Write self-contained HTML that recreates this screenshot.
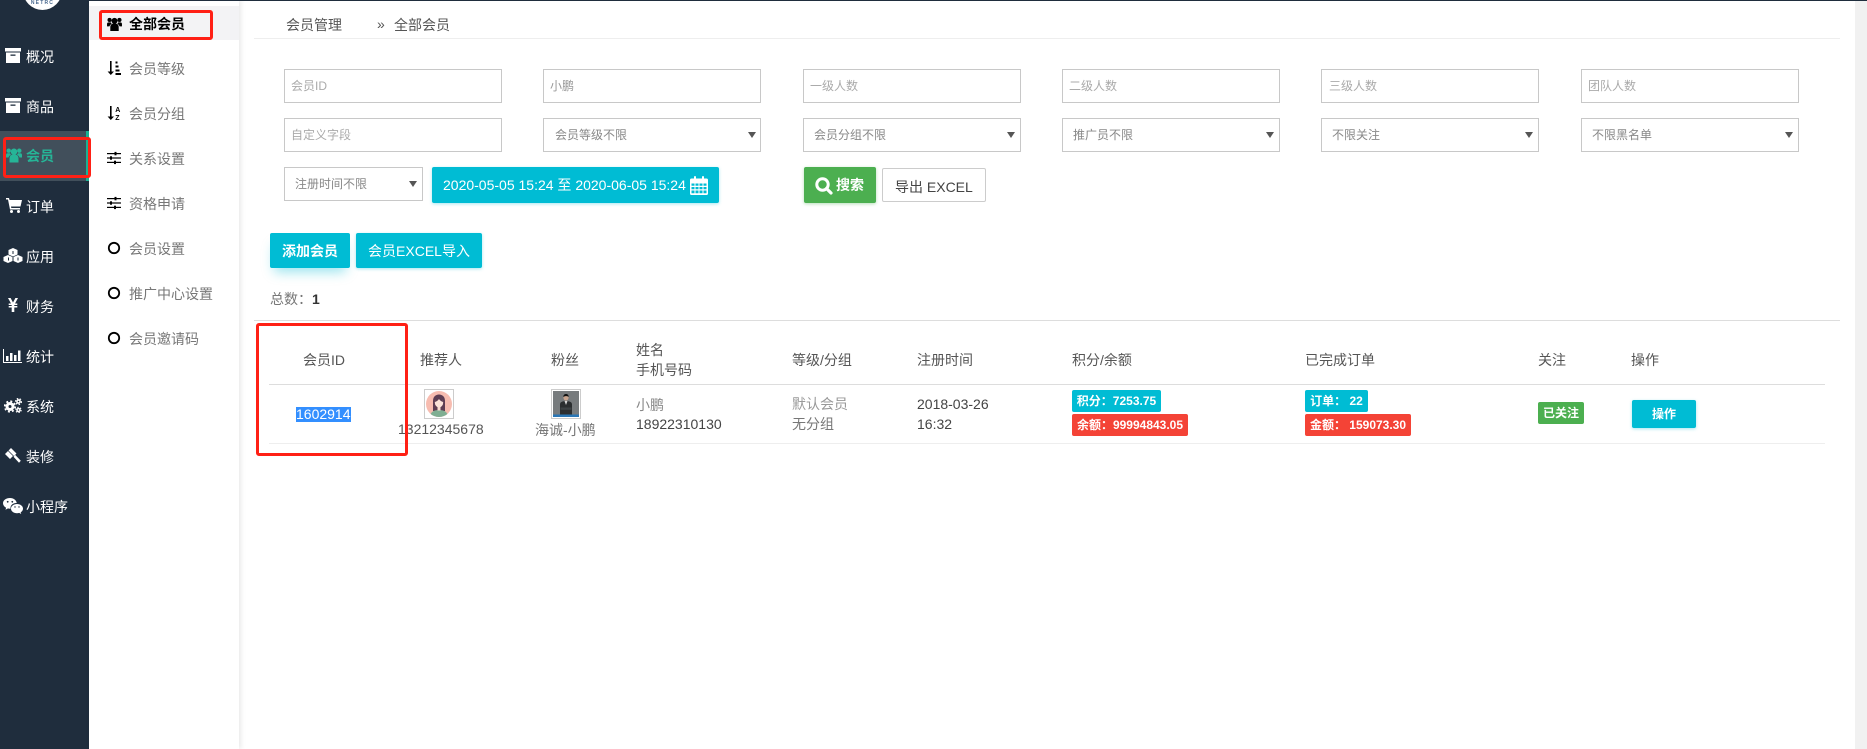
<!DOCTYPE html>
<html lang="zh-CN"><head><meta charset="utf-8"><title>全部会员</title>
<style>
*{box-sizing:border-box}
html,body{margin:0;padding:0;width:1867px;height:749px;overflow:hidden;background:#fff;font-family:"Liberation Sans","Noto Sans CJK SC",sans-serif;font-size:14px;color:#555}
.a{position:absolute}
.t{position:absolute;white-space:nowrap;line-height:20px;height:20px}
.w{color:#fff}
.box{position:absolute;width:218px;height:34px;border:1px solid #c8c8c8;background:#fff}
.ph{position:absolute;white-space:nowrap;font-size:12px;line-height:20px;color:#aaa}
.sel{color:#888}
.arr{position:absolute;width:0;height:0;border-left:4px solid transparent;border-right:4px solid transparent;border-top:6px solid #555}
.red{position:absolute;border:3px solid #ff2015;border-radius:3px;z-index:5}
.bdg{position:absolute;height:22px;line-height:22px;border-radius:2px;color:#fff;font-weight:bold;font-size:12px;text-align:center;white-space:nowrap}
.btn{position:absolute;border-radius:2px;color:#fff;text-align:center;white-space:nowrap}
svg{position:absolute;display:block}
.sub{color:#777}
.th{color:#555}
</style></head><body>
<svg width="0" height="0" style="position:absolute">
<symbol id="arc" viewBox="0 0 16 15"><path fill="currentColor" d="M0 0h16v3.500H0zM1 4.500h14V15H1z"/><rect x="5.500" y="6.500" width="5" height="1.300" fill="#1f2d3d"/></symbol>
<symbol id="usr" viewBox="0 0 16 15"><g fill="currentColor"><circle cx="8" cy="4.200" r="3.200"/><circle cx="2.700" cy="3.200" r="2.200"/><circle cx="13.300" cy="3.200" r="2.200"/><path d="M3.500 15v-4.500A3.500 3.500 0 0 1 7 7h2a3.500 3.500 0 0 1 3.500 3.500V15z"/><path d="M0 10V7.500A1.800 1.800 0 0 1 1.800 5.800H4a5 5 0 0 0 1 1.500A4.500 4.500 0 0 0 2.500 10zM16 10V7.500a1.800 1.800 0 0 0-1.800-1.700H12a5 5 0 0 1-1 1.500 4.500 4.500 0 0 1 2.500 2.700z"/></g></symbol>
<symbol id="slid" viewBox="0 0 14 14"><g fill="#000"><rect y="2" width="14" height="1.200"/><rect y="6.400" width="14" height="1.200"/><rect x="0" y="10.800" width="14" height="1.200"/><rect x="7.500" y="0.900" width="2" height="3.400"/><rect x="3" y="5.300" width="2" height="3.400"/><rect x="7" y="9.700" width="2" height="3.400"/></g></symbol>
<symbol id="cir" viewBox="0 0 14 14"><circle cx="7" cy="7" r="5.200" fill="none" stroke="#000" stroke-width="1.800"/></symbol>
</svg>

<!-- left nav -->
<div class="a" style="left:0;top:0;width:89px;height:749px;background:#1f2d3d"></div>
<div class="a" style="left:23px;top:-29px;width:39px;height:39px;border-radius:50%;background:#fff;overflow:hidden"><div class="a" style="left:0;width:39px;top:29px;text-align:center;font:bold 5px/6px 'Liberation Sans',sans-serif;letter-spacing:1.200px;color:#4a6a8f">NETRC</div></div>
<div class="a" style="left:0;top:131px;width:89px;height:50px;background:#414f5b"></div>
<div class="a" style="left:86px;top:131px;width:3px;height:50px;background:#1ab394"></div>

<svg style="left:5px;top:48px;color:#fff" width="16" height="15"><use href="#arc"/></svg>
<div class="t w" style="left:26px;top:47px">概况</div>
<svg style="left:5px;top:98px;color:#fff" width="16" height="15"><use href="#arc"/></svg>
<div class="t w" style="left:26px;top:97px">商品</div>
<svg style="left:6px;top:147px;color:#26b597" width="16" height="16"><use href="#usr"/></svg>
<div class="t" style="left:26px;top:146px;color:#26b597;font-weight:bold">会员</div>

<svg style="left:6px;top:198px" width="16" height="15" viewBox="0 0 16 15"><path fill="#fff" d="M0 0h3l.5 2H16l-1.500 6.500H5l.3 1.500H14v1.500H4L2 1.500H0z"/><circle cx="5.500" cy="13.500" r="1.500" fill="#fff"/><circle cx="12.500" cy="13.500" r="1.500" fill="#fff"/></svg>
<div class="t w" style="left:26px;top:197px">订单</div>
<svg style="left:3px;top:248px" width="20" height="15" viewBox="0 0 20 15"><g fill="#fff"><path d="M10 0l4.500 2v4.500L10 8.500 5.500 6.500V2z"/><path d="M5 7l4.500 2v4L5 15 .5 13V9z"/><path d="M15 7l4.500 2v4L15 15l-4.500-2V9z"/></g><path d="M5.500 9.500v3M15 9.500v3M10 3v3" stroke="#1f2d3d" stroke-width="1"/></svg>
<div class="t w" style="left:26px;top:247px">应用</div>
<svg style="left:8px;top:298px" width="10" height="14" viewBox="0 0 10 14"><path fill="#fff" d="M0 0h2.600L5 4.500 7.400 0H10L7 5.500h2.300V7H6.300v1H9.300v1.500H6.300V14H3.700V9.500H.7V8h3V7H.7V5.500H3z"/></svg>
<div class="t w" style="left:26px;top:297px">财务</div>
<svg style="left:3px;top:349px" width="19" height="14" viewBox="0 0 19 14"><path fill="#fff" d="M0 0h1v13h18v1H0z"/><path fill="#fff" d="M3 7h2.500v5H3zM7 4h2.500v8H7zM11 6h2.500v6H11zM15 1.500h2.500V12H15z"/></svg>
<div class="t w" style="left:26px;top:347px">统计</div>
<svg style="left:4px;top:398px" width="18" height="15" viewBox="0 0 18 15"><g fill="none" stroke="#fff"><circle cx="6" cy="8.500" r="3" stroke-width="3"/><circle cx="6" cy="8.500" r="5.200" stroke-width="1.800" stroke-dasharray="2 2.100"/><circle cx="14.500" cy="3.500" r="1.600" stroke-width="1.600"/><circle cx="14.500" cy="3.500" r="3" stroke-width="1.200" stroke-dasharray="1.500 1.500"/><circle cx="14.500" cy="12" r="1.500" stroke-width="1.500"/><circle cx="14.500" cy="12" r="2.700" stroke-width="1" stroke-dasharray="1.400 1.400"/></g></svg>
<div class="t w" style="left:26px;top:397px">系统</div>
<svg style="left:5px;top:448px" width="16" height="15" viewBox="0 0 16 15"><path fill="#fff" d="M6 0l5.500 5.500-2.500 2.500L3.500 2.500zM0 6l3-3 5 5-3 3zM8.500 8.800l1.800-1.800 5.500 5.800-1.800 1.900z"/></svg>
<div class="t w" style="left:26px;top:447px">装修</div>
<svg style="left:3px;top:498px" width="20" height="16" viewBox="0 0 20 16"><g fill="#fff"><path d="M7 0c3.600 0 6.500 2.300 6.700 5-3.400-.2-6.200 2-6.200 4.800 0 .3 0 .6.100.9H7c-.7 0-1.400-.1-2-.3L2.500 11.700l.6-2C1.200 8.600 0 7 0 5.200 0 2.300 3.100 0 7 0z"/><path d="M14 6c3.300 0 6 2 6 4.600 0 1.500-.9 2.800-2.300 3.700l.5 1.700-2-1.100c-.7.2-1.400.3-2.200.3-3.300 0-6-2-6-4.600S10.700 6 14 6z"/></g><g fill="#1f2d3d"><circle cx="4.700" cy="3.800" r=".9"/><circle cx="9.300" cy="3.800" r=".9"/><circle cx="12" cy="9" r=".7"/><circle cx="16" cy="9" r=".7"/></g></svg>
<div class="t w" style="left:26px;top:497px">小程序</div>

<!-- sub nav -->
<div class="a" style="left:89px;top:0;width:150px;height:749px;background:#fff;box-shadow:2px 0 5px rgba(0,0,0,.09)"></div>
<div class="a" style="left:89px;top:6px;width:150px;height:34px;background:#f3f3f5"></div>
<svg style="left:107px;top:17px;color:#000" width="15" height="14"><use href="#usr"/></svg>
<div class="t" style="left:129px;top:14px;color:#000;font-weight:bold">全部会员</div>

<svg style="left:107px;top:61px" width="14" height="14" viewBox="0 0 14 14"><path d="M3 0h1.600v10.500H7L3.800 14 .6 10.500H3z"/><path d="M8.500 0.500h2v2h-2zM8.500 4.500h3v2h-3zM8.500 8.500h4v2h-4zM8.500 12h5.500v2H8.500z"/></svg>
<div class="t sub" style="left:129px;top:59px">会员等级</div>
<svg style="left:107px;top:106px" width="14" height="14" viewBox="0 0 14 14"><path d="M3 0h1.600v10.500H7L3.800 14 .6 10.500H3z"/><text x="8.200" y="6" font-family="Liberation Sans" font-size="7" font-weight="bold">A</text><text x="8.200" y="14" font-family="Liberation Sans" font-size="7" font-weight="bold">Z</text></svg>
<div class="t sub" style="left:129px;top:104px">会员分组</div>
<svg style="left:107px;top:151px" width="14" height="14"><use href="#slid"/></svg>
<div class="t sub" style="left:129px;top:149px">关系设置</div>
<svg style="left:107px;top:196px" width="14" height="14"><use href="#slid"/></svg>
<div class="t sub" style="left:129px;top:194px">资格申请</div>
<svg style="left:107px;top:241px" width="14" height="14"><use href="#cir"/></svg>
<div class="t sub" style="left:129px;top:239px">会员设置</div>
<svg style="left:107px;top:286px" width="14" height="14"><use href="#cir"/></svg>
<div class="t sub" style="left:129px;top:284px">推广中心设置</div>
<svg style="left:107px;top:331px" width="14" height="14"><use href="#cir"/></svg>
<div class="t sub" style="left:129px;top:329px">会员邀请码</div>

<!-- top line / scrollbar -->
<div class="a" style="left:89px;top:0;width:1778px;height:1px;background:#1f2d3d"></div>
<div class="a" style="left:1855px;top:1px;width:12px;height:748px;background:#f1f1f1"></div>

<!-- breadcrumb -->
<div class="t" style="left:286px;top:15px">会员管理</div>
<div class="t" style="left:377px;top:14px">»</div>
<div class="t" style="left:394px;top:15px">全部会员</div>
<div class="a" style="left:254px;top:38px;width:1586px;height:1px;background:#eee"></div>

<!-- filters row 1 -->
<div class="box" style="left:284px;top:69px"></div><div class="ph" style="left:291px;top:76px">会员ID</div>
<div class="box" style="left:543px;top:69px"></div><div class="ph" style="left:550px;top:76px;color:#999">小鹏</div>
<div class="box" style="left:803px;top:69px"></div><div class="ph" style="left:810px;top:76px">一级人数</div>
<div class="box" style="left:1062px;top:69px"></div><div class="ph" style="left:1069px;top:76px">二级人数</div>
<div class="box" style="left:1321px;top:69px"></div><div class="ph" style="left:1329px;top:76px">三级人数</div>
<div class="box" style="left:1581px;top:69px"></div><div class="ph" style="left:1588px;top:76px">团队人数</div>
<!-- row 2 -->
<div class="box" style="left:284px;top:118px"></div><div class="ph" style="left:291px;top:125px">自定义字段</div>
<div class="box" style="left:543px;top:118px"></div><div class="ph sel" style="left:555px;top:125px">会员等级不限</div><div class="arr" style="left:748px;top:132px"></div>
<div class="box" style="left:803px;top:118px"></div><div class="ph sel" style="left:814px;top:125px">会员分组不限</div><div class="arr" style="left:1007px;top:132px"></div>
<div class="box" style="left:1062px;top:118px"></div><div class="ph sel" style="left:1073px;top:125px">推广员不限</div><div class="arr" style="left:1266px;top:132px"></div>
<div class="box" style="left:1321px;top:118px"></div><div class="ph sel" style="left:1332px;top:125px">不限关注</div><div class="arr" style="left:1525px;top:132px"></div>
<div class="box" style="left:1581px;top:118px"></div><div class="ph sel" style="left:1592px;top:125px">不限黑名单</div><div class="arr" style="left:1785px;top:132px"></div>
<!-- row 3 -->
<div class="box" style="left:284px;top:167px;width:139px"></div><div class="ph sel" style="left:295px;top:174px">注册时间不限</div><div class="arr" style="left:409px;top:181px"></div>
<div class="btn" style="left:432px;top:167px;width:287px;height:36px;background:#00bcd4;box-shadow:0 1px 3px rgba(0,188,212,.35)"></div>
<div class="t w" style="left:443px;top:175px">2020-05-05 15:24 至 2020-06-05 15:24</div>
<svg style="left:690px;top:176px" width="18" height="19" viewBox="0 0 18 19"><path fill="#fff" fill-rule="evenodd" d="M1.500 2.500H4V1a1 1 0 0 1 2 0v1.500h6V1a1 1 0 0 1 2 0v1.500h2.500A1.500 1.500 0 0 1 18 4v13.500a1.500 1.500 0 0 1-1.500 1.500h-15A1.500 1.500 0 0 1 0 17.500V4a1.500 1.500 0 0 1 1.500-1.500zM1.500 7.500v2.300h3V7.500zM5.500 7.500v2.300h3V7.500zM9.500 7.500v2.300h3V7.500zM13.500 7.500v2.300h3V7.500zM1.500 11v2.300h3V11zM5.500 11v2.300h3V11zM9.500 11v2.300h3V11zM13.500 11v2.300h3V11zM1.500 14.500v2.800h3v-2.800zM5.500 14.500v2.800h3v-2.800zM9.500 14.500v2.800h3v-2.800zM13.500 14.500v2.800h3v-2.800z"/></svg>

<div class="btn" style="left:804px;top:167px;width:72px;height:36px;background:#4caf50;box-shadow:0 1px 3px rgba(76,175,80,.4)"></div>
<svg style="left:815px;top:177px" width="18" height="18" viewBox="0 0 18 18"><circle cx="7.500" cy="7.500" r="5.700" fill="none" stroke="#fff" stroke-width="3"/><path d="M11.500 11.500L16 16" stroke="#fff" stroke-width="3.200" stroke-linecap="round"/></svg>
<div class="t w" style="left:836px;top:175px;font-weight:bold">搜索</div>
<div class="a" style="left:882px;top:168px;width:104px;height:34px;border:1px solid #ccc;border-radius:2px;background:#fff"></div>
<div class="t" style="left:895px;top:177px;color:#444">导出 EXCEL</div>

<!-- action buttons -->
<div class="btn" style="left:270px;top:233px;width:80px;height:35px;line-height:37px;background:#00bcd4;box-shadow:0 8px 12px -4px rgba(0,188,212,.4);font-weight:bold">添加会员</div>
<div class="btn" style="left:356px;top:233px;width:126px;height:35px;line-height:37px;background:#00bcd4;box-shadow:0 1px 3px rgba(0,188,212,.35)">会员EXCEL导入</div>
<div class="t" style="left:270px;top:289px;color:#777">总数：</div>
<div class="t" style="left:312px;top:289px;color:#333;font-weight:bold">1</div>

<!-- table -->
<div class="a" style="left:254px;top:320px;width:1586px;height:1px;background:#ddd"></div>
<div class="a" style="left:269px;top:384px;width:1556px;height:1px;background:#ddd"></div>
<div class="a" style="left:269px;top:443px;width:1556px;height:1px;background:#eee"></div>

<div class="t th" style="left:303px;top:350px">会员ID</div>
<div class="t th" style="left:420px;top:350px">推荐人</div>
<div class="t th" style="left:551px;top:350px">粉丝</div>
<div class="t th" style="left:636px;top:340px">姓名</div>
<div class="t th" style="left:636px;top:360px">手机号码</div>
<div class="t th" style="left:792px;top:350px">等级/分组</div>
<div class="t th" style="left:917px;top:350px">注册时间</div>
<div class="t th" style="left:1072px;top:350px">积分/余额</div>
<div class="t th" style="left:1305px;top:350px">已完成订单</div>
<div class="t th" style="left:1538px;top:350px">关注</div>
<div class="t th" style="left:1631px;top:350px">操作</div>

<div class="a" style="left:296px;top:407px;width:55px;height:15px;background:#338fff"></div>
<div class="t w" style="left:296px;top:404px">1602914</div>

<div class="a" style="left:424px;top:389px;width:30px;height:30px;border:1px solid #ccc;background:#fff"></div>
<svg style="left:426px;top:391px" width="26" height="26" viewBox="0 0 26 26"><defs><clipPath id="c1"><circle cx="13" cy="13" r="13"/></clipPath></defs><circle cx="13" cy="13" r="13" fill="#f7bcb0"/><g clip-path="url(#c1)"><path d="M7 20V10c0-4 2.500-6.500 6-6.500S19 6 19 10v10z" fill="#5d3d52"/><path d="M4 26c0-5 4-7 9-7s9 2 9 7z" fill="#7fae92"/><path d="M11.500 15h3v4.500h-3z" fill="#f8dcd0"/><ellipse cx="13" cy="11.500" rx="4.200" ry="5" fill="#fbe3d8"/><path d="M8.800 11c.5-3.500 2.500-5 4.200-5s3.700 1.500 4.200 5c-2-.5-3.500-2-4.200-3-.7 1-2.200 2.500-4.200 3z" fill="#5d3d52"/></g></svg>
<div class="t" style="left:398px;top:419px">13212345678</div>

<div class="a" style="left:551px;top:389px;width:30px;height:30px;border:1px solid #ccc;background:#fff"></div>
<svg style="left:553px;top:391px" width="26" height="26" viewBox="0 0 26 26"><rect width="26" height="26" fill="#777b7d"/><rect y="23.500" width="26" height="2.500" fill="#2a76b5"/><path d="M7 23.500V13.500c0-2.500 2.500-3.500 6-3.500s6 1 6 3.500V23.500z" fill="#2b2e30"/><path d="M11.500 10h3L13 14z" fill="#d8d8d8"/><path d="M7.500 16.500h11v2.300h-11z" fill="#3d4245"/><ellipse cx="13" cy="6.500" rx="2.600" ry="3.100" fill="#c9a48e"/><path d="M10.300 6C10.300 4 11.500 3 13 3s2.700 1 2.700 3c-1-1-3.700-1.300-5.400 0z" fill="#111"/></svg>
<div class="t" style="left:535px;top:420px;color:#777">海诚-小鹏</div>

<div class="t" style="left:636px;top:395px;color:#888">小鹏</div>
<div class="t" style="left:636px;top:414px;color:#444">18922310130</div>
<div class="t" style="left:792px;top:394px;color:#999">默认会员</div>
<div class="t" style="left:792px;top:414px;color:#777">无分组</div>
<div class="t" style="left:917px;top:394px;color:#444">2018-03-26</div>
<div class="t" style="left:917px;top:414px;color:#444">16:32</div>

<div class="bdg" style="left:1072px;top:390px;width:89px;background:#00bcd4">积分：7253.75</div>
<div class="bdg" style="left:1072px;top:414px;width:116px;background:#f44336">余额：99994843.05</div>
<div class="bdg" style="left:1305px;top:390px;width:63px;background:#00bcd4">订单： 22</div>
<div class="bdg" style="left:1305px;top:414px;width:106px;background:#f44336">金额： 159073.30</div>
<div class="bdg" style="left:1538px;top:402px;width:46px;background:#4caf50">已关注</div>
<div class="btn" style="left:1632px;top:400px;width:64px;height:28px;line-height:28px;font-size:12px;font-weight:bold;background:#00bcd4;box-shadow:0 1px 3px rgba(0,188,212,.35)">操作</div>

<!-- red annotations -->
<div class="red" style="left:99px;top:10px;width:114px;height:30px"></div>
<div class="red" style="left:3px;top:137px;width:88px;height:41px"></div>
<div class="red" style="left:256px;top:323px;width:152px;height:133px"></div>
</body></html>
